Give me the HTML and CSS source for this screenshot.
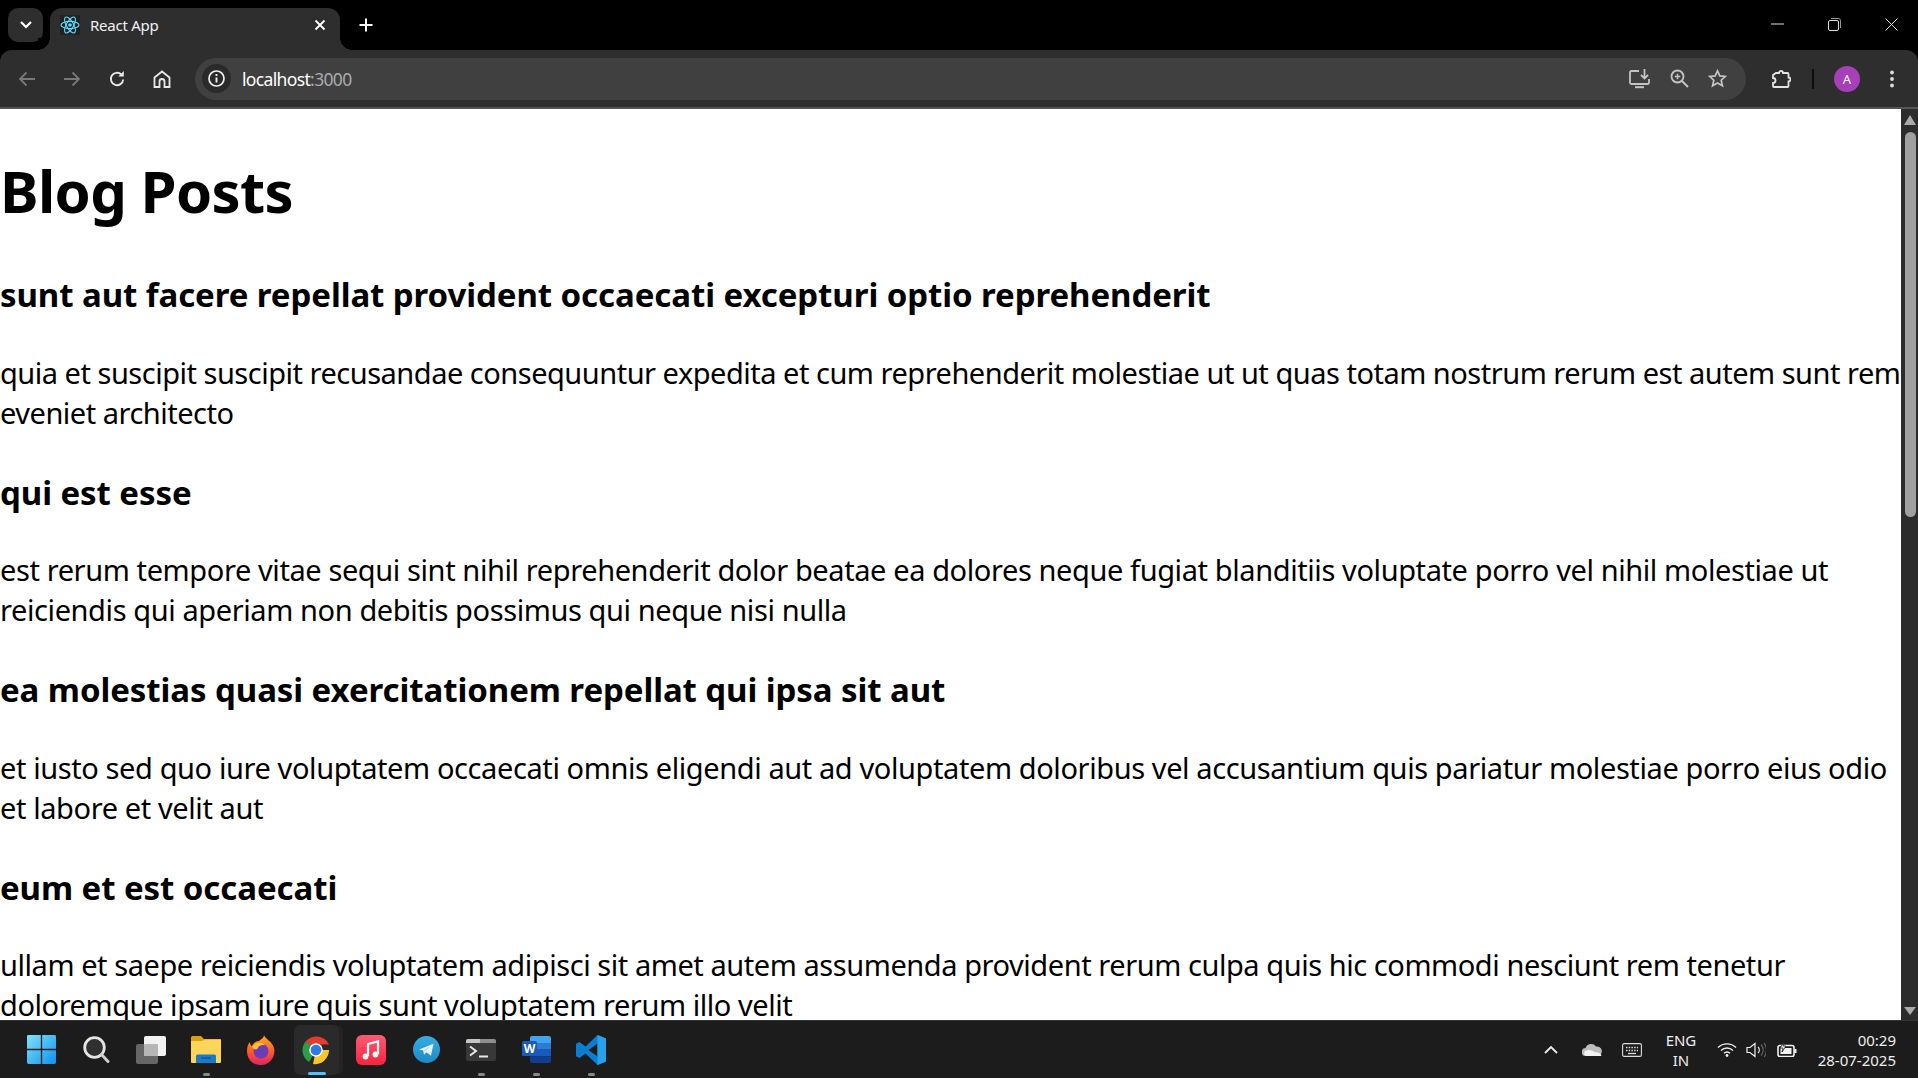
FILE: index.html
```html
<!DOCTYPE html>
<html lang="en">
<head>
<meta charset="utf-8">
<title>React App</title>
<link rel="stylesheet" href="styles.css">
</head>
<body>
<div class="screen">
  <div class="tabstrip">
    <div class="tabsearch"><svg width="14" height="10" viewBox="0 0 14 10"><path d="M2 2l5 5 5-5" fill="none" stroke="#fff" stroke-width="2.2"/></svg></div>
    <div class="tab">
      <svg class="favicon" width="20" height="20" viewBox="0 0 20 20"><rect width="20" height="20" fill="#222"/><g fill="none" stroke="#61dafb" stroke-width="1.1"><ellipse cx="10" cy="10" rx="9" ry="3.6"/><ellipse cx="10" cy="10" rx="9" ry="3.6" transform="rotate(60 10 10)"/><ellipse cx="10" cy="10" rx="9" ry="3.6" transform="rotate(120 10 10)"/></g><circle cx="10" cy="10" r="1.8" fill="#61dafb"/></svg>
      <span class="tab-title">React App</span>
      <svg class="tab-close" width="12" height="12" viewBox="0 0 12 12"><path d="M1.5 1.5l9 9M10.5 1.5l-9 9" stroke="#fff" stroke-width="1.8"/></svg>
    </div>
    <svg class="newtab" width="14" height="14" viewBox="0 0 14 14"><path d="M7 .5v13M.5 7h13" stroke="#fff" stroke-width="2"/></svg>
    <div class="caption">
      <svg width="13" height="2" viewBox="0 0 13 2"><path d="M0 1h13" stroke="#ddd" stroke-width="1"/></svg>
      <svg width="13" height="13" viewBox="0 0 13 13"><rect x=".5" y="2.5" width="10" height="10" rx="1.5" fill="none" stroke="#ddd"/><path d="M3 .5h7.5a2 2 0 0 1 2 2V10" fill="none" stroke="#999"/></svg>
      <svg width="13" height="13" viewBox="0 0 13 13"><path d="M.5.5l12 12M12.500.5l-12 12" stroke="#ddd" stroke-width="1"/></svg>
    </div>
  </div>
  <div class="toolbar">
    <svg class="tool back" width="18" height="16" viewBox="0 0 18 16"><path d="M17 8H2M8.500 1.500L2 8l6.500 6.500" fill="none" stroke="#787878" stroke-width="1.800"/></svg>
    <svg class="tool fwd" width="18" height="16" viewBox="0 0 18 16"><path d="M1 8h15M9.500 1.500L16 8l-6.500 6.500" fill="none" stroke="#787878" stroke-width="1.800"/></svg>
    <svg class="tool reload" width="18" height="18" viewBox="0 0 18 18"><path d="M15.200 9.500a6.200 6.200 0 1 1-1.900-5" fill="none" stroke="#e8e8e8" stroke-width="1.900"/><path d="M15.800 1v5.500h-5.500z" fill="#e8e8e8"/></svg>
    <svg class="tool home" width="18" height="18" viewBox="0 0 18 18"><path d="M1.500 7.500L9 1.500l7.500 6V17h-5v-5.500a2.500 2.500 0 0 0-5 0V17h-5z" fill="none" stroke="#e8e8e8" stroke-width="1.800"/></svg>
    <div class="omnibox">
      <div class="info"><svg width="17" height="17" viewBox="0 0 17 17"><circle cx="8.500" cy="8.500" r="7.500" fill="none" stroke="#f0f0f0" stroke-width="1.700"/><path d="M8.500 7.500v5M8.500 4v2" stroke="#f0f0f0" stroke-width="1.900"/></svg></div>
      <span class="url">localhost<span class="port">:3000</span></span>
      <div class="omni-actions">
        <svg width="22" height="20" viewBox="0 0 22 20"><path d="M10 2H2.500A1.500 1.500 0 0 0 1 3.500v10A1.500 1.500 0 0 0 2.500 15h16a1.500 1.500 0 0 0 1.500-1.500V10" fill="none" stroke="#c4c4c4" stroke-width="1.800"/><path d="M6 18.200h9" stroke="#c4c4c4" stroke-width="2"/><path d="M15.500 0v8.500M12 6l3.500 3.500L19 6" fill="none" stroke="#c4c4c4" stroke-width="1.800"/></svg>
        <svg width="19" height="19" viewBox="0 0 19 19"><circle cx="7.500" cy="7.500" r="6" fill="none" stroke="#c4c4c4" stroke-width="1.800"/><path d="M12 12l6 6" stroke="#c4c4c4" stroke-width="2"/><path d="M7.500 4.800v5.400M4.800 7.500h5.400" stroke="#c4c4c4" stroke-width="1.500"/></svg>
        <svg width="19" height="19" viewBox="0 0 19 19"><path d="M9.500 1.800l2.300 5.100 5.500.6-4.100 3.700 1.200 5.500-4.900-2.800-4.900 2.800 1.200-5.500L1.700 7.500l5.500-.6z" fill="none" stroke="#c4c4c4" stroke-width="1.700"/></svg>
      </div>
    </div>
    <svg class="tool ext" width="20" height="20" viewBox="0 0 20 20"><path d="M5 4h3a2 2 0 0 1 4 0h4.500a1 1 0 0 1 1 1v3.500a2 2 0 0 1 0 4V17a1 1 0 0 1-1 1H3a1 1 0 0 1-1-1v-3a2.500 2.500 0 0 0 0-5V6z" fill="none" stroke="#e4e4e4" stroke-width="1.800"/></svg>
    <div class="divider"></div>
    <div class="avatar">A</div>
    <svg class="tool dots" width="4" height="18" viewBox="0 0 4 18"><circle cx="2" cy="2.500" r="1.900" fill="#ddd"/><circle cx="2" cy="9" r="1.900" fill="#ddd"/><circle cx="2" cy="15.500" r="1.900" fill="#ddd"/></svg>
  </div>
  <div class="viewport">
    <main class="page">
      <h1>Blog Posts</h1>
      <article>
        <h2>sunt aut facere repellat provident occaecati excepturi optio reprehenderit</h2>
        <p class="tight">quia et suscipit suscipit recusandae consequuntur expedita et cum reprehenderit molestiae ut ut quas totam nostrum rerum est autem sunt rem<br>eveniet architecto</p>
      </article>
      <article>
        <h2>qui est esse</h2>
        <p class="loose">est rerum tempore vitae sequi sint nihil reprehenderit dolor beatae ea dolores neque fugiat blanditiis voluptate porro vel nihil molestiae ut<br>reiciendis qui aperiam non debitis possimus qui neque nisi nulla</p>
      </article>
      <article>
        <h2>ea molestias quasi exercitationem repellat qui ipsa sit aut</h2>
        <p class="loose">et iusto sed quo iure voluptatem occaecati omnis eligendi aut ad voluptatem doloribus vel accusantium quis pariatur molestiae porro eius odio<br>et labore et velit aut</p>
      </article>
      <article>
        <h2>eum et est occaecati</h2>
        <p>ullam et saepe reiciendis voluptatem adipisci sit amet autem assumenda provident rerum culpa quis hic commodi nesciunt rem tenetur<br>doloremque ipsam iure quis sunt voluptatem rerum illo velit</p>
      </article>
    </main>
    <div class="scrollbar">
      <div class="arrow-up"></div>
      <div class="thumb"></div>
      <div class="arrow-down"></div>
    </div>
  </div>
  <div class="taskbar">
    <div class="task-icons">
      <div class="task"><svg width="29" height="29" viewBox="0 0 30 30"><defs><linearGradient id="win" x1="0" y1="0" x2="1" y2="1"><stop offset="0" stop-color="#7fe3fb"/><stop offset="1" stop-color="#0f90ee"/></linearGradient></defs><path d="M1.500 0h12.800v14.300H0V1.500A1.500 1.500 0 0 1 1.500 0zM15.700 0h12.800A1.500 1.500 0 0 1 30 1.500v12.800H15.700zM0 15.700h14.300V30H1.500A1.500 1.500 0 0 1 0 28.500zM15.700 15.700H30v12.800a1.500 1.500 0 0 1-1.500 1.500H15.700z" fill="url(#win)"/></svg></div>
      <div class="task"><svg width="27" height="27" viewBox="0 0 27 27"><circle cx="11.500" cy="11.500" r="9.800" fill="#303030" stroke="#e4e4e4" stroke-width="2.800"/><path d="M18.500 18.500l6.500 7" stroke="#d0d0d0" stroke-width="3" stroke-linecap="round"/></svg></div>
      <div class="task"><svg width="30" height="28" viewBox="0 0 30 28"><rect x="0" y="8" width="22" height="20" rx="2" fill="#666"/><rect x="8" y="0" width="22" height="20" rx="2" fill="#f2f2f2"/><rect x="8" y="8" width="14" height="12" rx="1" fill="#b6b6b6"/></svg></div>
      <div class="task dot"><svg width="30" height="27" viewBox="0 0 30 27"><path d="M0 1.500A1.500 1.500 0 0 1 1.500 0h8.500l3 3h16a1 1 0 0 1 1 1v10H0z" fill="#dd9f12"/><path d="M0 5h11l3-1.500h16V26a1 1 0 0 1-1 1H1a1 1 0 0 1-1-1z" fill="#fcd55a"/><path d="M5 20a1.500 1.500 0 0 1 1.500-1.500h17A1.500 1.500 0 0 1 25 20v7H5z" fill="#1a79c9"/><path d="M10 22h10" stroke="#0e4f8a" stroke-width="1.200"/></svg></div>
      <div class="task"><svg width="28" height="30" viewBox="0 0 28 30"><defs><linearGradient id="fx" x1="0" y1="0" x2="0" y2="1"><stop offset="0" stop-color="#ffb21e"/><stop offset=".55" stop-color="#ff5a2b"/><stop offset="1" stop-color="#e01f6b"/></linearGradient></defs><path d="M17 0c1 4 8 6 10 13 2 8-4 17-13 17S0 24 0 16c0-4 1-7 3-9 0 2 1 4 2 4 1-3 4-5 7-5 2-2 5-3 5-6z" fill="url(#fx)"/><circle cx="14" cy="16" r="7.500" fill="#6b3bb8"/><path d="M5 12c3-5 9-6 13-2-3 0-6 0-7 3-1 2-4 2-6-1z" fill="#ffbf2e"/></svg></div>
      <div class="task active"><svg width="30" height="30" viewBox="0 0 30 30"><path d="M15 15L4.500 6.500A14 14 0 0 1 28 9.500H15z" fill="#e33b2e"/><path d="M15 15L8 27A14 14 0 0 1 4.500 6.500z" fill="#2d9e48"/><path d="M15 15h13a14 14 0 0 1-16 14z" fill="#fbc72c"/><circle cx="15" cy="15" r="6.800" fill="#fff"/><circle cx="15" cy="15" r="5.300" fill="#2d79e6"/></svg></div>
      <div class="task"><svg width="30" height="30" viewBox="0 0 30 30"><defs><linearGradient id="mu" x1="0" y1="0" x2="0" y2="1"><stop offset="0" stop-color="#fb5c74"/><stop offset="1" stop-color="#fa233b"/></linearGradient></defs><rect width="30" height="30" rx="6" fill="url(#mu)"/><path d="M12 21V9l10-2.500V19" fill="none" stroke="#fff" stroke-width="2.200"/><circle cx="9.500" cy="21.500" r="2.900" fill="#fff"/><circle cx="19.500" cy="19.500" r="2.900" fill="#fff"/></svg></div>
      <div class="task"><svg width="27" height="27" viewBox="0 0 27 27"><defs><linearGradient id="tg" x1="0" y1="0" x2="0" y2="1"><stop offset="0" stop-color="#37aee2"/><stop offset="1" stop-color="#1e88c7"/></linearGradient></defs><circle cx="13.500" cy="13.500" r="13.500" fill="url(#tg)"/><path d="M6 13.500l14.500-5.800-2.500 12-4.500-3.500-2.500 2.500-.8-4.200z" fill="#e8f4fb"/><path d="M10.200 14.500l7.300-4.500-5.500 5.300z" fill="#b7d9ec"/></svg></div>
      <div class="task dot"><svg width="30" height="22" viewBox="0 0 30 22"><rect width="30" height="22" rx="2" fill="#383838"/><path d="M0 2a2 2 0 0 1 2-2h12v4H0z" fill="#c4c4c4"/><path d="M14 0h14a2 2 0 0 1 2 2v2H14z" fill="#8e8e8e"/><path d="M4 7.500l6 4.500-6 4.500" fill="none" stroke="#e8e8e8" stroke-width="2"/><path d="M13 17.500h9" stroke="#e8e8e8" stroke-width="2"/></svg></div>
      <div class="task dot"><svg width="29" height="27" viewBox="0 0 29 27"><path d="M8 2a2 2 0 0 1 2-2h17a2 2 0 0 1 2 2v5H8z" fill="#41a5ee"/><rect x="8" y="7" width="21" height="6.700" fill="#2b7cd3"/><rect x="8" y="13.700" width="21" height="6.700" fill="#185abd"/><path d="M8 20.400h21V25a2 2 0 0 1-2 2H10a2 2 0 0 1-2-2z" fill="#103f91"/><rect y="5" width="15" height="15" rx="1.500" fill="#185abd"/><text x="7.500" y="17" class="word-w">W</text></svg></div>
      <div class="task dot"><svg width="30" height="30" viewBox="0 0 30 30"><path d="M21.500 0L9.500 11.500 3.500 7 0 8.800v12.400L3.500 23l6-4.500L21.500 30l8.500-3.500V3.500zM21.500 8.500v13L12.500 15z" fill="#0a7ed0" fill-rule="evenodd"/><path d="M21.500 0L30 3.500v23L21.500 30z" fill="#28a0ea"/></svg></div>
    </div>
    <div class="tray">
      <svg class="tray-chevron" width="14" height="9" viewBox="0 0 14 9"><path d="M1 8l6-6 6 6" fill="none" stroke="#eee" stroke-width="1.800"/></svg>
      <svg class="tray-cloud" width="20" height="13" viewBox="0 0 20 13"><path d="M4 13a4 4 0 0 1-.5-8A6 6 0 0 1 14 3.500a4.500 4.500 0 0 1 2 9.500z" fill="#bdbdbd"/><path d="M4 13a3 3 0 0 1 1-5.800c4-.5 6 1 8 2 3 .2 6 .5 6.500 3.800z" fill="#f2f2f2"/></svg>
      <svg class="tray-kbd" width="20" height="14" viewBox="0 0 20 14"><rect x=".6" y=".6" width="18.800" height="12.800" rx="1.500" fill="none" stroke="#ddd" stroke-width="1.100"/><path d="M4 4.500h12M4 7.500h12" stroke="#ddd" stroke-width="1.500" stroke-dasharray="1.500 1.200"/><path d="M6 10.500h8" stroke="#ddd" stroke-width="1.300"/></svg>
      <div class="lang"><span>ENG</span><span>IN</span></div>
      <svg class="tray-wifi" width="20" height="15" viewBox="0 0 20 15"><path d="M1 5.500a13 13 0 0 1 18 0M4 8.500a8.500 8.500 0 0 1 12 0M7 11.300a4 4 0 0 1 6 0" fill="none" stroke="#eee" stroke-width="1.400"/><circle cx="10" cy="13.500" r="1.400" fill="#eee"/></svg>
      <svg class="tray-vol" width="20" height="16" viewBox="0 0 20 16"><path d="M1 5.500h3L9 1.500v13l-5-4H1z" fill="none" stroke="#eee" stroke-width="1.200"/><path d="M12 5a4 4 0 0 1 0 6" fill="none" stroke="#eee" stroke-width="1.100"/><path d="M15 2.500a8 8 0 0 1 0 11M18 1a11 11 0 0 1 0 14" fill="none" stroke="#666" stroke-width="1.100"/></svg>
      <svg class="tray-batt" width="20" height="15" viewBox="0 0 20 15"><rect x="1" y="3.500" width="16" height="11" rx="2" fill="none" stroke="#f2f2f2" stroke-width="1.600"/><rect x="3.500" y="6" width="11" height="6" fill="#f2f2f2"/><rect x="17.500" y="7" width="2" height="4" fill="#f2f2f2"/><path d="M7 0L3 6h3l-1 4 4-6H6z" fill="#f2f2f2" stroke="#1c1c1c" stroke-width=".8"/></svg>
      <div class="clock"><span>00:29</span><span>28-07-2025</span></div>
    </div>
  </div>
</div>
</body>
</html>
```
FILE: styles.css
```css
* { box-sizing: border-box; }
html, body { margin: 0; height: 100%; overflow: hidden; }
.screen { display: flex; flex-direction: column; width: 1918px; height: 1078px; background: #000; font-family: "Noto Sans", "Open Sans", sans-serif; }

.tabstrip { display: flex; align-items: flex-start; height: 50px; flex: none; padding: 8px 0 0 8px; background: #000; }
.tabsearch { width: 35px; height: 34px; border-radius: 10px; background: #2e2e2e; display: flex; align-items: center; justify-content: center; }
.tab { position: relative; margin-left: 7px; width: 290px; height: 42px; background: #2e2e2e; border-radius: 12px 12px 0 0; display: flex; align-items: center; padding: 0 14px 8px 10px; }
.tab::before, .tab::after { content: ""; position: absolute; bottom: 0; width: 12px; height: 12px; background: radial-gradient(circle at var(--cx) 0, #000 11.500px, #2e2e2e 12px); }
.tab::before { left: -12px; --cx: 0; }
.tab::after { right: -12px; --cx: 100%; }
.favicon { flex: none; }
.tab-title { margin-left: 10px; flex: 1; font-size: 15px; color: #f1f1f1; letter-spacing: -.25px; }
.tab-close { flex: none; }
.newtab { margin: 10px 0 0 19px; flex: none; }
.caption { margin-left: auto; width: 127px; margin-right: 20px; padding-top: 2px; height: 30px; display: flex; justify-content: space-between; align-items: center; }

.toolbar { display: flex; align-items: center; height: 59px; flex: none; background: #2e2e2e; border-radius: 12px 12px 0 0; border-bottom: 2px solid #555; padding: 0 24px 0 18px; }
.tool { flex: none; }
.fwd { margin-left: 27px; }
.reload { margin-left: 27px; }
.home { margin-left: 27px; }
.omnibox { margin-left: 24px; width: 1552px; height: 42px; border-radius: 21px; background: #404040; display: flex; align-items: center; padding-left: 7px; }
.info { width: 29px; height: 29px; border-radius: 50%; background: #2a2a2a; display: flex; align-items: center; justify-content: center; }
.url { margin-left: 11px; font-size: 17.5px; color: #fff; letter-spacing: -.65px; }
.port { color: #aaa; }
.omni-actions { margin-left: auto; margin-right: 19px; display: flex; align-items: center; gap: 19px; }
.ext { margin-left: 25px; }
.divider { width: 2px; height: 20px; margin-left: 21px; background: #0c0c0c; }
.avatar { width: 26px; height: 26px; margin-left: 20px; border-radius: 50%; background: #a73fb8; color: #fff; font-size: 13px; display: flex; align-items: center; justify-content: center; }
.dots { margin-left: 30px; }

.viewport { flex: 1; min-height: 0; display: flex; background: #fff; overflow: hidden; }
.page { flex: 1; min-width: 0; color: #000; white-space: nowrap; overflow: hidden; }
h1 { margin: 0 0 8px; padding-top: 46px; font-size: 58px; line-height: 72px; font-weight: 700; letter-spacing: -.65px; }
h2 { margin: 0; padding-top: 38px; font-size: 33px; line-height: 44px; font-weight: 700; letter-spacing: -.08px; }
p { margin: 0; padding-top: 35.5px; font-size: 29px; line-height: 40px; letter-spacing: -.44px; }
p.tight { letter-spacing: -.49px; }
p.loose { letter-spacing: -.4px; }

.scrollbar { flex: none; width: 17px; background: #2c2c2c; display: flex; flex-direction: column; align-items: center; padding: 6px 0 5px 1px; }
.arrow-up { width: 0; height: 0; border: 6px solid transparent; border-top: 0; border-bottom: 10px solid #aaa; flex: none; }
.thumb { width: 11px; height: 385px; margin-top: 7px; border-radius: 5.500px; background: #a0a0a0; flex: none; }
.arrow-down { width: 0; height: 0; margin-top: auto; border: 6px solid transparent; border-bottom: 0; border-top: 8px solid #aaa; flex: none; }

.taskbar { flex: none; height: 58px; background: #1c1c1c; border-top: 1px solid #333; display: flex; align-items: center; justify-content: space-between; padding-left: 13.5px; }
.task-icons { display: flex; align-items: center; }
.task { position: relative; width: 55px; height: 50px; display: flex; align-items: center; justify-content: center; }
.task.dot::after { content: ""; position: absolute; bottom: -1px; left: 24px; width: 7px; height: 3px; border-radius: 2px; background: #8a8a8a; }
.task.active { background: #2a2a2a; border-radius: 6px; width: 45px; margin: 0 5px; box-shadow: 5px 0 0 -1px #242424; }
.task.active::after { content: ""; position: absolute; bottom: 0; left: 14px; width: 18px; height: 3px; border-radius: 2px; background: #4cc2ff; }
.word-w { font-size: 12px; font-weight: 700; fill: #fff; text-anchor: middle; }

.tray { display: flex; align-items: center; padding-right: 22px; color: #eee; }
.tray-cloud { margin-left: 24px; }
.tray-kbd { margin-left: 20px; }
.lang { margin-left: 8px; width: 62px; display: flex; flex-direction: column; align-items: center; font-size: 15px; line-height: 20px; letter-spacing: -.1px; }
.tray-wifi { margin-left: 5px; }
.tray-vol { margin-left: 9px; }
.tray-batt { margin-left: 11px; }
.clock { margin-left: 19px; width: 80px; display: flex; flex-direction: column; align-items: flex-end; font-size: 15px; line-height: 20px; }
```
